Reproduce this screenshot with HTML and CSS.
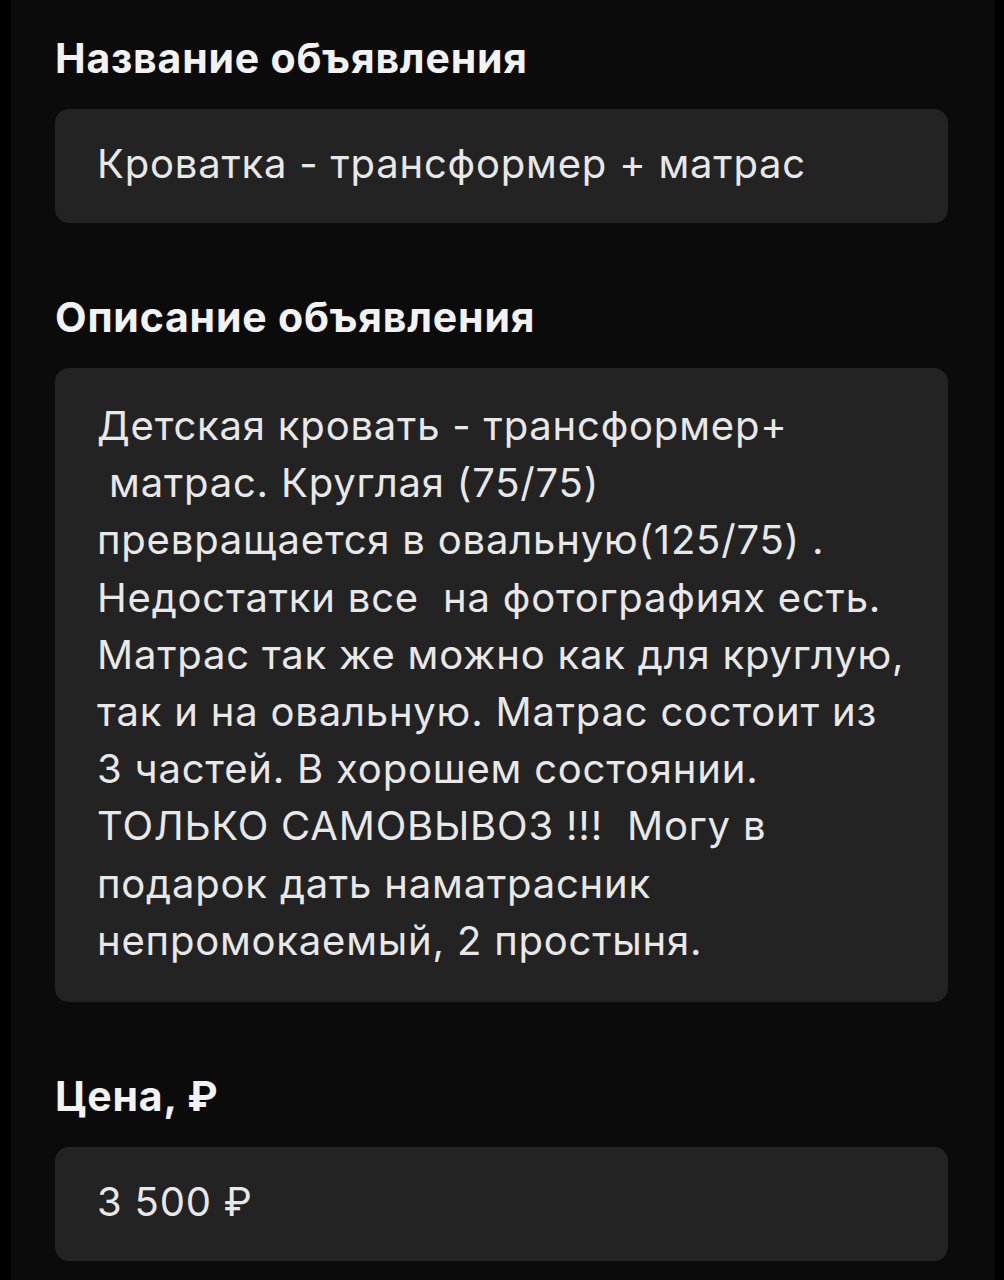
FILE: index.html
```html
<!DOCTYPE html>
<html lang="ru">

<head>
    <meta charset="UTF-8">
    <meta name="viewport" content="width=device-width, initial-scale=1.0">
    <title>Объявление</title>
    <link rel="stylesheet" href="styles.css">
</head>

<body>
    <div class="screen">
        <div class="form-group">
            <div class="form-label">Название объявления</div>
            <div class="field field-single">Кроватка - трансформер + матрас</div>
        </div>

        <div class="form-group">
            <div class="form-label">Описание объявления</div>
            <div class="field field-multi">Детская кровать - трансформер+
 матрас. Круглая (75/75)
превращается в овальную(125/75) .
Недостатки все  на фотографиях есть.
Матрас так же можно как для круглую,
так и на овальную. Матрас состоит из
3 частей. В хорошем состоянии.
ТОЛЬКО САМОВЫВОЗ !!!  Могу в
подарок дать наматрасник
непромокаемый, 2 простыня.</div>
        </div>

        <div class="form-group">
            <div class="form-label">Цена, ₽</div>
            <div class="field field-single">3 500 ₽</div>
        </div>
    </div>
</body>

</html>
```

FILE: styles.css
```css
html,
body {
    margin: 0;
    padding: 0;
    background-color: #000;
}

body {
    font-family: Inter, "Noto Sans", sans-serif;
    padding: 0 9px 0 11px;
    min-height: 1280px;
    box-sizing: border-box;
}

.screen {
    background-color: #0b0b0b;
    min-height: 1280px;
    padding: 36px 47px 0 44px;
    box-sizing: border-box;
}

.form-group {
    margin-bottom: 72px;
}

.form-label {
    color: #f2f2f2;
    font-size: 41px;
    font-weight: 700;
    letter-spacing: 0.8px;
    line-height: 44px;
    margin-bottom: 29px;
}

.field {
    background-color: #232323;
    border-radius: 14px;
    color: #e8e8e8;
    font-size: 40px;
    letter-spacing: 0.8px;
    padding: 0 42px;
}

.field-single {
    height: 114px;
    line-height: 110px;
}

.field-multi {
    white-space: pre-wrap;
    line-height: 57.2px;
    padding-top: 29px;
    padding-bottom: 33px;
}
```
